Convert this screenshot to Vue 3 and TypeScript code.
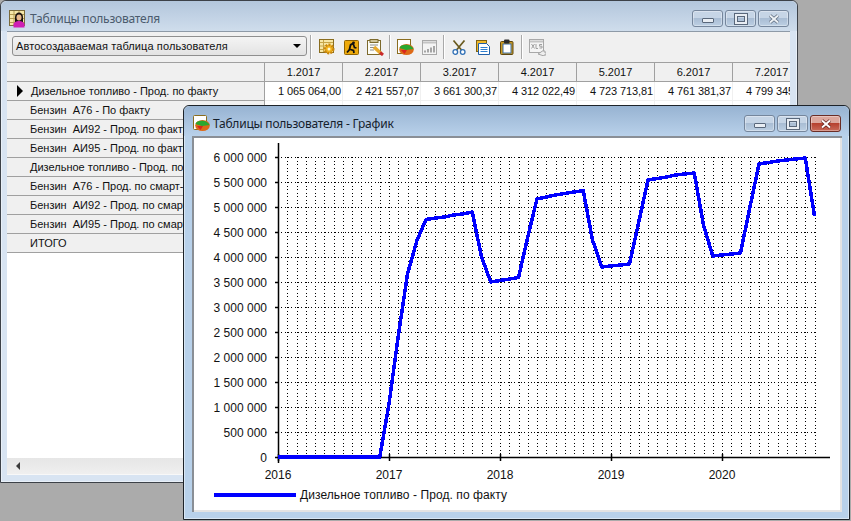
<script setup lang="ts">
const periods: string[] = ['1.2017', '2.2017', '3.2017', '4.2017', '5.2017', '6.2017', '7.2017']
const values: string[] = ['1 065 064,00', '2 421 557,07', '3 661 300,37', '4 312 022,49', '4 723 713,81', '4 761 381,37', '4 799 345,12']
const rows: string[] = [
  'Дизельное топливо - Прод. по факту',
  'Бензин  А76 - По факту',
  'Бензин  АИ92 - Прод. по факту',
  'Бензин  АИ95 - Прод. по факту',
  'Дизельное топливо - Прод. по смарт-картам',
  'Бензин  А76 - Прод. по смарт-картам',
  'Бензин  АИ92 - Прод. по смарт-картам',
  'Бензин  АИ95 - Прод. по смарт-картам',
  'ИТОГО'
]

const yLabels = Array.from({ length: 13 }, (_, i) => {
  const v = i * 500000
  const text = v === 0 ? '0' : String(v).replace(/\B(?=(\d{3})+$)/g, ' ')
  return { y: 457 - i * 25, text }
})
const years = [2016, 2017, 2018, 2019, 2020].map((year, i) => ({ year, x: 278 + i * 111 }))
const gridX = Array.from({ length: 58 }, (_, i) => 287.25 + i * 9.25)
const plot: number[] = [
  457, 457, 457, 457, 457, 457, 457, 457, 457, 457, 457, 457,
  404, 336, 274, 241, 219.5, 218, 217, 215, 214, 212,
  257, 282, 280.5, 279, 277.5, 237, 199, 197, 195, 193.5, 192, 190.7,
  240, 267, 266, 265, 264, 222, 180, 178.5, 177, 175, 174, 173,
  225, 256, 255, 254, 253, 208, 164, 162.5, 161, 160, 159, 158, 216
]
const linePoints = plot.map((y, i) => `${278 + i * 9.25},${y}`).join(' ')
</script>

<template>
  <div class="desktop">
    <section class="window back">
      <header class="titlebar">
        <svg class="title-icon" width="18" height="18" viewBox="0 0 18 18">
          <rect x="0.500" y="0.500" width="15" height="15" fill="#f6e7a8" stroke="#7a6a3a" />
          <path d="M1 4.500h14M1 8.500h14M1 12.500h14M5 1v14M10 1v14" stroke="#b59c55" fill="none" />
          <path d="M6 7c0-6 8-6 8 0v5H6z" fill="#1c1410" />
          <ellipse cx="10" cy="7.500" rx="2.500" ry="3" fill="#e9b98e" />
          <path d="M4.500 17.500v-3c0-2 3-3.500 5.500-3.500s5.500 1.500 5.500 3.500v3z" fill="#cf1fb4" />
        </svg>
        <span class="title-text">Таблицы пользователя</span>
        <div class="caption-buttons">
          <span class="cap"><i class="glyph-min"></i></span>
          <span class="cap"><i class="glyph-max"></i></span>
          <span class="cap"><svg width="12" height="10" viewBox="0 0 12 10"><path d="M2 1.500l8 7M10 1.500l-8 7" stroke="#59677a" stroke-width="3.400" /><path d="M2 1.500l8 7M10 1.500l-8 7" stroke="#eef2f6" stroke-width="2" /></svg></span>
        </div>
      </header>
      <div class="client">
        <div class="toolbar">
          <div class="combo">
            <span>Автосоздаваемая таблица пользователя</span>
            <i class="combo-arrow"></i>
          </div>
          <i class="sep first"></i>
          <span class="tool"><svg width="16" height="16" viewBox="0 0 16 16">
            <rect x="0.500" y="0.500" width="14" height="13" fill="#f7e7a6" stroke="#8a6d1f" />
            <path d="M1 3.500h13M1 7h5M1 10.500h4M4.500 1v12" stroke="#c6a548" fill="none" />
            <circle cx="10" cy="10" r="4.300" fill="#f0b21c" stroke="#c9870f" stroke-dasharray="2 1.200" stroke-width="2.400" />
            <circle cx="10" cy="10" r="1.500" fill="#fff6d0" />
          </svg></span>
          <span class="tool"><svg width="15" height="15" viewBox="0 0 15 15">
            <rect x="0.500" y="0.500" width="14" height="14" rx="1" fill="#eeaa0c" stroke="#8f6405" />
            <path d="M3 12.500l2.500-3 1-4.500c1-1 2.500-1.500 3-.5l1 3 2 .5M6.500 9.500l3 1 .5 2.500" stroke="#111" stroke-width="1.800" fill="none" />
            <circle cx="9.500" cy="2.800" r="1.400" fill="#111" />
          </svg></span>
          <span class="tool"><svg width="17" height="17" viewBox="0 0 17 17">
            <rect x="0.500" y="1.500" width="13" height="14" fill="#fdfdf6" stroke="#7d6a2c" />
            <rect x="3" y="0.500" width="8" height="3" fill="#cfc39a" stroke="#7d6a2c" />
            <path d="M3 6h8M3 8.500h6M3 11h4" stroke="#8d8d8d" />
            <path d="M7 8l7 6.500" stroke="#e8a92c" stroke-width="3.500" />
            <path d="M13 13.500l3 2.500" stroke="#c92a2a" stroke-width="3" />
          </svg></span>
          <i class="sep"></i>
          <span class="tool"><svg width="17" height="17" viewBox="0 0 17 17">
            <rect x="0.500" y="0.500" width="13" height="14" fill="#fff" stroke="#8a6d1f" />
            <ellipse cx="9.500" cy="10.500" rx="7.300" ry="5.500" fill="#dd6a18" />
            <path d="M2.500 9c1-4.500 12-4.500 14 1l-7.500 1z" fill="#2aa82f" />
            <path d="M4 11h6l-2.500 4z" fill="#d9251d" />
          </svg></span>
          <span class="tool"><svg width="15" height="15" viewBox="0 0 15 15">
            <rect x="0.500" y="0.500" width="14" height="14" fill="#f4f4f4" stroke="#a8a8a8" />
            <path d="M1 2.500h13" stroke="#c4c4c4" stroke-width="2" />
            <path d="M3 12.500v-2M6 12.500v-3.500M9 12.500v-5M12 12.500V6" stroke="#a5a5a5" stroke-width="2" />
          </svg></span>
          <i class="sep"></i>
          <span class="tool"><svg width="14" height="15" viewBox="0 0 14 15">
            <path d="M1.500 0.500l8 9.500M12.500 0.500l-8 9.500" stroke="#6a5a1e" stroke-width="1.700" fill="none" />
            <circle cx="3.300" cy="12" r="2.300" fill="#fff" stroke="#2f6fb5" stroke-width="1.300" />
            <circle cx="10.700" cy="12" r="2.300" fill="#fff" stroke="#2f6fb5" stroke-width="1.300" />
          </svg></span>
          <span class="tool"><svg width="14" height="15" viewBox="0 0 14 15">
            <rect x="0.500" y="0.500" width="10" height="11" fill="#f0b92a" stroke="#7d6216" />
            <path d="M2.500 3.500h8l3 3v8h-11z" fill="#fff" stroke="#1f5fa8" />
            <path d="M4.500 7.500h7M4.500 9.500h7M4.500 11.500h7" stroke="#2f7fd0" />
          </svg></span>
          <span class="tool"><svg width="14" height="16" viewBox="0 0 14 16">
            <rect x="0.500" y="2.500" width="12.500" height="13" rx="1" fill="#c9981f" stroke="#5e4710" />
            <rect x="3" y="5" width="8" height="9" fill="#fff" stroke="#3b6ea8" />
            <rect x="4" y="0.500" width="5.500" height="4" rx="1" fill="#2a2a2a" />
          </svg></span>
          <i class="sep"></i>
          <span class="tool"><svg width="17" height="17" viewBox="0 0 17 17">
            <rect x="0.500" y="0.500" width="14" height="13" fill="#f4f4f4" stroke="#a8a8a8" />
            <path d="M1 2.500h13" stroke="#c4c4c4" stroke-width="2" />
            <path d="M9 15l6-4v2h2v3h-2v1z" fill="#eee" stroke="#a5a5a5" />
            <path d="M2.500 5l3 4.500M5.500 5l-3 4.500M7 5v4.500h2M13 5.500h-2.500v1.700H13v1.800h-2.500" stroke="#a0a0a0" fill="none" />
          </svg></span>
        </div>
        <div class="grid-wrap">
          <div class="grid-row head">
            <div class="fixed"></div>
            <div v-for="p in periods" :key="p" class="col-head">{{ p }}</div>
          </div>
          <div v-for="(label, r) in rows" :key="label" class="grid-row">
            <div class="fixed label" :class="{ current: r === 0 }">
              <i v-if="r === 0" class="pointer"></i>
              <span>{{ label }}</span>
            </div>
            <div v-for="(v, c) in values" :key="c" class="cell">{{ r === 0 ? v : '' }}</div>
          </div>
        </div>
        <div class="hscroll"><i class="scroll-left"></i></div>
      </div>
    </section>

    <section class="window front">
      <header class="titlebar">
        <svg class="title-icon" width="17" height="17" viewBox="0 0 17 17">
          <rect x="0.500" y="0.500" width="13" height="14" rx="1" fill="#fff" stroke="#8a6d1f" />
          <ellipse cx="9.500" cy="10.500" rx="7.300" ry="5.500" fill="#dd6a18" />
          <path d="M2.500 9c1-4.500 12-4.500 14 1l-7.500 1z" fill="#2aa82f" />
          <path d="M4 11h6l-2.500 4z" fill="#d9251d" />
        </svg>
        <span class="title-text">Таблицы пользователя - График</span>
        <div class="caption-buttons">
          <span class="cap"><i class="glyph-min"></i></span>
          <span class="cap"><i class="glyph-max"></i></span>
          <span class="cap close"><svg width="12" height="10" viewBox="0 0 12 10"><path d="M2 1.500l8 7M10 1.500l-8 7" stroke="#5d1d16" stroke-width="3.400" /><path d="M2 1.500l8 7M10 1.500l-8 7" stroke="#fff" stroke-width="2" /></svg></span>
        </div>
      </header>
      <div class="client chart-client">
        <svg class="chart" width="650" height="375" viewBox="192 136 650 375">
          <g class="dots">
            <line v-for="l in yLabels.slice(1)" :key="l.y" class="dots-h" :x1="278" :x2="816" :y1="l.y + 0.5" :y2="l.y + 0.5" />
            <line v-for="x in gridX" :key="x" class="dots-v" :x1="Math.round(x) + 0.5" :x2="Math.round(x) + 0.5" y1="157" y2="457" />
          </g>
          <g class="axis">
            <line x1="278.500" x2="278.500" y1="143" y2="463" />
            <line x1="278" x2="830" y1="457.500" y2="457.500" />
            <line v-for="l in yLabels" :key="l.y" x1="275" x2="278" :y1="l.y + 0.5" :y2="l.y + 0.5" />
            <line v-for="t in years" :key="t.year" :x1="t.x + 0.5" :x2="t.x + 0.5" y1="454" y2="461" />
          </g>
          <polyline class="series" :points="linePoints" />
          <text v-for="l in yLabels" :key="l.text" x="267" :y="l.y + 4.500" text-anchor="end">{{ l.text }}</text>
          <text v-for="t in years" :key="t.year" :x="t.x" y="479" text-anchor="middle">{{ t.year }}</text>
          <line class="series" x1="214" x2="296" y1="495" y2="495" />
          <text class="legend-text" x="300" y="499">Дизельное топливо - Прод. по факту</text>
        </svg>
      </div>
    </section>
  </div>
</template>

<style>
html, body { margin: 0; background: #ababab; }
</style>

<style scoped>
.desktop {
  position: relative;
  width: 851px;
  height: 521px;
  overflow: hidden;
  background: #ababab;
  font-family: "Liberation Sans", Arial, sans-serif;
}
.window {
  position: absolute;
  box-sizing: border-box;
  display: flex;
  flex-direction: column;
  border: 1px solid #3c4148;
  border-radius: 6px 6px 0 0;
  box-shadow: inset 0 0 0 1px rgba(255, 255, 255, 0.45);
}
.back {
  left: 0;
  top: 0;
  width: 798px;
  height: 483px;
  background: #d8e4f2;
  padding: 0 7px 7px 6px;
}
.front {
  left: 183px;
  top: 105px;
  width: 667px;
  height: 415px;
  background: #b8d1ea;
  border-color: #1d2329;
  padding: 0 7px 7px 8px;
}
.titlebar {
  flex: none;
  display: flex;
  align-items: center;
  height: 30px;
  margin: 0 -7px 0 -6px;
  padding: 5px 8px 0 8px;
  box-sizing: border-box;
}
.back .titlebar {
  background: linear-gradient(#b3c6dc, #cfddec);
  border-radius: 6px 6px 0 0;
  color: #4b5b6d;
}
.front .titlebar {
  background: linear-gradient(#97b3d2, #b9d1ea);
  border-radius: 6px 6px 0 0;
  color: #16212c;
  margin: 0 -7px 0 -8px;
  padding: 5px 8px 0 9px;
}
.title-icon { flex: none; margin-right: 3px; }
.title-text {
  font-family: "Noto Sans", sans-serif;
  font-size: 12px;
  letter-spacing: -0.22px;
  white-space: nowrap;
}
.caption-buttons {
  display: flex;
  gap: 2px;
  margin-left: auto;
}
.cap {
  box-sizing: border-box;
  width: 31px;
  height: 17px;
  display: flex;
  align-items: center;
  justify-content: center;
  border: 1px solid #75869c;
  border-radius: 3px;
  background: linear-gradient(#c6d5e6 0 45%, #a9bdd4 50%, #bccfe3);
  box-shadow: inset 0 0 0 1px rgba(255, 255, 255, 0.35);
}
.cap.close {
  border-color: #6a2d26;
  background: linear-gradient(#dca79d 0 45%, #b6412f 50%, #c96b5a);
}
.glyph-min {
  display: block;
  width: 10px;
  height: 3px;
  margin-top: 4px;
  background: #e8edf3;
  border: 1px solid #59677a;
  border-radius: 1px;
}
.glyph-max {
  display: block;
  width: 8px;
  height: 6px;
  border: 2px solid #e8edf3;
  outline: 1px solid #59677a;
  box-shadow: inset 0 0 0 1px #59677a;
}
.client {
  flex: 1;
  min-height: 0;
  display: flex;
  flex-direction: column;
  overflow: hidden;
  background: #fff;
  border-top: 1px solid #8e9aa7;
}
.toolbar {
  flex: none;
  height: 30px;
  box-sizing: border-box;
  display: flex;
  align-items: center;
  padding: 0 0 0 5px;
  background: #f0f0f0;
}
.combo {
  box-sizing: border-box;
  width: 295px;
  height: 20px;
  margin-bottom: 2px;
  display: flex;
  align-items: center;
  padding: 0 4px 0 3px;
  border: 1px solid #8f8f8f;
  border-radius: 3px;
  background: linear-gradient(#f4f4f4, #e3e3e3);
  font-size: 11px;
  color: #111;
}
.combo span { flex: 1; letter-spacing: 0.1px; white-space: nowrap; }
.combo-arrow {
  width: 0;
  height: 0;
  margin-right: 1px;
  border-left: 4px solid transparent;
  border-right: 4px solid transparent;
  border-top: 4px solid #000;
}
.sep {
  flex: none;
  width: 1px;
  height: 24px;
  margin: 0 3px 0 2px;
  background: #a9a9a9;
  box-shadow: 1px 0 0 #fff;
}
.sep.first { margin: 0 4px 0 3px; }
.tool {
  flex: none;
  width: 24px;
  display: flex;
  justify-content: center;
  align-items: center;
}
.grid-wrap {
  flex: 1;
  min-height: 0;
  overflow: hidden;
  background: #fff;
}
.grid-row {
  display: grid;
  grid-template-columns: 258px repeat(7, 78px);
  height: 19px;
  font-size: 11px;
  color: #111;
}
.fixed {
  box-sizing: border-box;
  background: #f0f0f0;
  border-right: 1px solid #a0a0a0;
  border-bottom: 1px solid #a0a0a0;
}
.head .fixed { border-top: 1px solid #a0a0a0; }
.head { height: 20px; }
.col-head {
  box-sizing: border-box;
  display: flex;
  align-items: center;
  justify-content: center;
  background: #f0f0f0;
  border-top: 1px solid #a0a0a0;
  border-right: 1px solid #a0a0a0;
  border-bottom: 1px solid #a0a0a0;
}
.label {
  position: relative;
  display: flex;
  align-items: center;
  padding-left: 23px;
  white-space: pre;
  overflow: hidden;
}
.label.current { padding-left: 24px; }
.pointer {
  position: absolute;
  left: 10px;
  top: 3px;
  width: 0;
  height: 0;
  border-left: 6px solid #000;
  border-top: 6px solid transparent;
  border-bottom: 6px solid transparent;
}
.cell {
  box-sizing: border-box;
  display: flex;
  align-items: center;
  justify-content: flex-end;
  padding-right: 1px;
  white-space: nowrap;
  letter-spacing: -0.1px;
  background: #fff;
  border-right: 1px solid #f0f0f0;
  border-bottom: 1px solid #f0f0f0;
}
.hscroll {
  flex: none;
  height: 16px;
  display: flex;
  align-items: center;
  background: linear-gradient(#e6e6e6, #efefef);
  border-bottom: 1px solid #f8f8f8;
}
.scroll-left {
  margin-left: 9px;
  width: 0;
  height: 0;
  border-right: 4px solid #3c3c3c;
  border-top: 4px solid transparent;
  border-bottom: 4px solid transparent;
}
.chart-client {
  border: none;
  box-shadow: inset 2px 2px 0 #8a8f96, inset -2px -2px 0 #e3e3e3;
}
.chart { display: block; }
.chart text {
  font-family: "Liberation Sans", Arial, sans-serif;
  font-size: 12px;
  fill: #111;
}
.chart .legend-text { letter-spacing: 0.08px; }
.dots line {
  stroke: #000;
  stroke-width: 1;
  shape-rendering: crispEdges;
}
.dots .dots-h { stroke-dasharray: 1 2.33; }
.dots .dots-v { stroke-dasharray: 1 2.57; }
.axis line {
  stroke: #000;
  stroke-width: 1.500;
}
.series {
  fill: none;
  stroke: #0000ff;
  stroke-width: 3.500;
  stroke-linejoin: round;
  shape-rendering: crispEdges;
}
</style>
